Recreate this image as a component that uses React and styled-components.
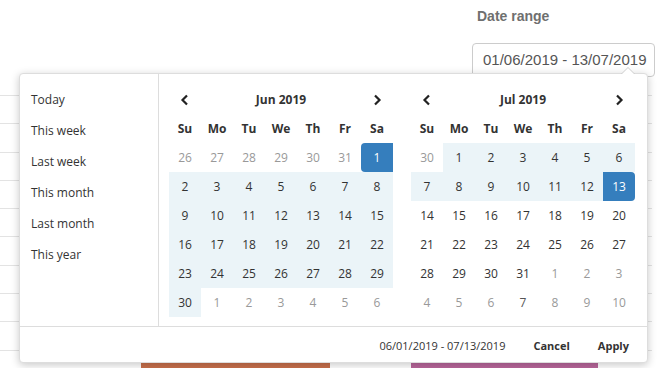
import React from 'react';
import styled, { createGlobalStyle } from 'styled-components';

const GlobalStyle = createGlobalStyle`
  html, body { margin: 0; padding: 0; background: #fff; }
  * { box-sizing: border-box; }
`;

// --- PAGE ---
const Page = styled.div`
  position: relative;
  width: 664px;
  height: 368px;
  overflow: hidden;
  font-family: 'Liberation Sans', Arial, sans-serif;
`;

const Header = styled.div`
  height: 95px;
  padding: 8px 0 0 472px;
`;

const Label = styled.div`
  font-size: 14px;
  font-weight: bold;
  color: #6f6f6f;
  padding-left: 5px;
  line-height: 16px;
`;

const Input = styled.div`
  margin-top: 19px;
  width: 183px;
  height: 34px;
  border: 1px solid #ccc;
  border-radius: 4px;
  padding: 0 0 0 10px;
  font-size: 15px;
  line-height: 32px;
  color: #555;
  white-space: nowrap;
`;

const Chart = styled.div`
  width: 652px;
  height: 267px;
  background: repeating-linear-gradient(
    to bottom,
    #e3e3e3 0px,
    #e3e3e3 1px,
    transparent 1px,
    transparent 28.3px
  );
`;

const Bars = styled.div`
  display: flex;
  gap: 81px;
  padding-left: 141px;
`;

const Bar = styled.div`
  width: ${p => p.$w}px;
  height: 8px;
  background: ${p => p.$color};
`;

// --- POPUP ---
const Popup = styled.div`
  position: absolute;
  left: 19px;
  top: 73px;
  width: 629px;
  background: #fff;
  border: 1px solid #ddd;
  border-radius: 4px;
  box-shadow: 0 2px 8px rgba(0, 0, 0, 0.22);
  font-family: 'Open Sans', 'Noto Sans', sans-serif;
  color: #333;

  &::before, &::after {
    content: '';
    position: absolute;
    border-left: 7px solid transparent;
    border-right: 7px solid transparent;
  }
  &::before {
    right: 12px;
    top: -7px;
    border-bottom: 7px solid #ccc;
  }
  &::after {
    right: 13px;
    top: -6px;
    border-left-width: 6px;
    border-right-width: 6px;
    border-bottom: 6px solid #fff;
  }
`;

const Body = styled.div`
  display: flex;
  border-bottom: 1px solid #ddd;
`;

const Ranges = styled.ul`
  list-style: none;
  margin: 0;
  padding: 10px 0 0;
  width: 140px;
  border-right: 1px solid #ddd;
`;

const RangeItem = styled.li`
  height: 31px;
  line-height: 31px;
  padding-left: 11px;
  font-size: 12px;
  color: #333;
`;

const Calendars = styled.div`
  display: flex;
  gap: 18px;
  padding: 11px 12px 9px 10px;
`;

const Grid = styled.div`
  display: grid;
  grid-template-columns: repeat(7, 32px);
  grid-auto-rows: 29px;
`;

const Nav = styled.div`
  display: flex;
  align-items: center;
  justify-content: center;
`;

const Title = styled.div`
  grid-column: span 5;
  display: flex;
  align-items: center;
  justify-content: center;
  font-size: 12px;
  font-weight: bold;
`;

const WeekDay = styled.div`
  display: flex;
  align-items: center;
  justify-content: center;
  font-size: 12px;
  font-weight: bold;
`;

const Day = styled.div`
  display: flex;
  align-items: center;
  justify-content: center;
  font-size: 12px;
  color: ${p => (p.$active ? '#fff' : p.$off ? (p.$hover ? '#555' : '#999') : '#333')};
  background: ${p => (p.$active ? '#357ebd' : p.$inRange ? '#ebf4f8' : '#fff')};
  border-radius: ${p => (p.$start ? '4px 0 0 4px' : p.$end ? '0 4px 4px 0' : '0')};
`;

const Footer = styled.div`
  display: flex;
  align-items: center;
  justify-content: flex-end;
  height: 35px;
  padding: 2px 4px 0 0;
`;

const Selected = styled.span`
  font-size: 11px;
  color: #333;
  margin-right: 14px;
`;

const Button = styled.button`
  border: none;
  background: none;
  padding: 0 14px;
  font-family: inherit;
  font-size: 11px;
  font-weight: bold;
  color: #333;
`;

const Chevron = ({ dir }) => (
  <svg width="10" height="12" viewBox="0 0 10 12">
    <path
      d={dir === 'left' ? 'M7 1.5 L2.5 6 L7 10.5' : 'M3 1.5 L7.5 6 L3 10.5'}
      fill="none"
      stroke="#222"
      strokeWidth="2.2"
    />
  </svg>
);

const WEEK = ['Su', 'Mo', 'Tu', 'We', 'Th', 'Fr', 'Sa'];
const START = new Date(2019, 5, 1).getTime();
const END = new Date(2019, 6, 13).getTime();

function Month({ year, month, title }) {
  const first = new Date(year, month, 1);
  const gridStart = new Date(year, month, 1 - first.getDay());
  const days = Array.from({ length: 42 }, (_, i) =>
    new Date(gridStart.getFullYear(), gridStart.getMonth(), gridStart.getDate() + i)
  );

  return (
    <Grid>
      <Nav><Chevron dir="left" /></Nav>
      <Title>{title}</Title>
      <Nav><Chevron dir="right" /></Nav>
      {WEEK.map(w => <WeekDay key={w}>{w}</WeekDay>)}
      {days.map(d => {
        const t = d.getTime();
        const off = d.getMonth() !== month;
        const start = !off && t === START;
        const end = !off && t === END;
        return (
          <Day
            key={t}
            $off={off}
            $inRange={!off && t >= START && t <= END}
            $active={start || end}
            $start={start}
            $end={end}
            $hover={month === 6 && off && d.getDate() === 7}
          >
            {d.getDate()}
          </Day>
        );
      })}
    </Grid>
  );
}

export default function App() {
  const ranges = ['Today', 'This week', 'Last week', 'This month', 'Last month', 'This year'];

  return (
    <Page>
      <GlobalStyle />
      <Header>
        <Label>Date range</Label>
        <Input>01/06/2019 - 13/07/2019</Input>
      </Header>
      <Chart />
      <Bars>
        <Bar $w={189} $color="#c8704c" />
        <Bar $w={187} $color="#b8679b" />
      </Bars>

      <Popup>
        <Body>
          <Ranges>
            {ranges.map(r => <RangeItem key={r}>{r}</RangeItem>)}
          </Ranges>
          <Calendars>
            <Month year={2019} month={5} title="Jun 2019" />
            <Month year={2019} month={6} title="Jul 2019" />
          </Calendars>
        </Body>
        <Footer>
          <Selected>06/01/2019 - 07/13/2019</Selected>
          <Button>Cancel</Button>
          <Button>Apply</Button>
        </Footer>
      </Popup>
    </Page>
  );
}
